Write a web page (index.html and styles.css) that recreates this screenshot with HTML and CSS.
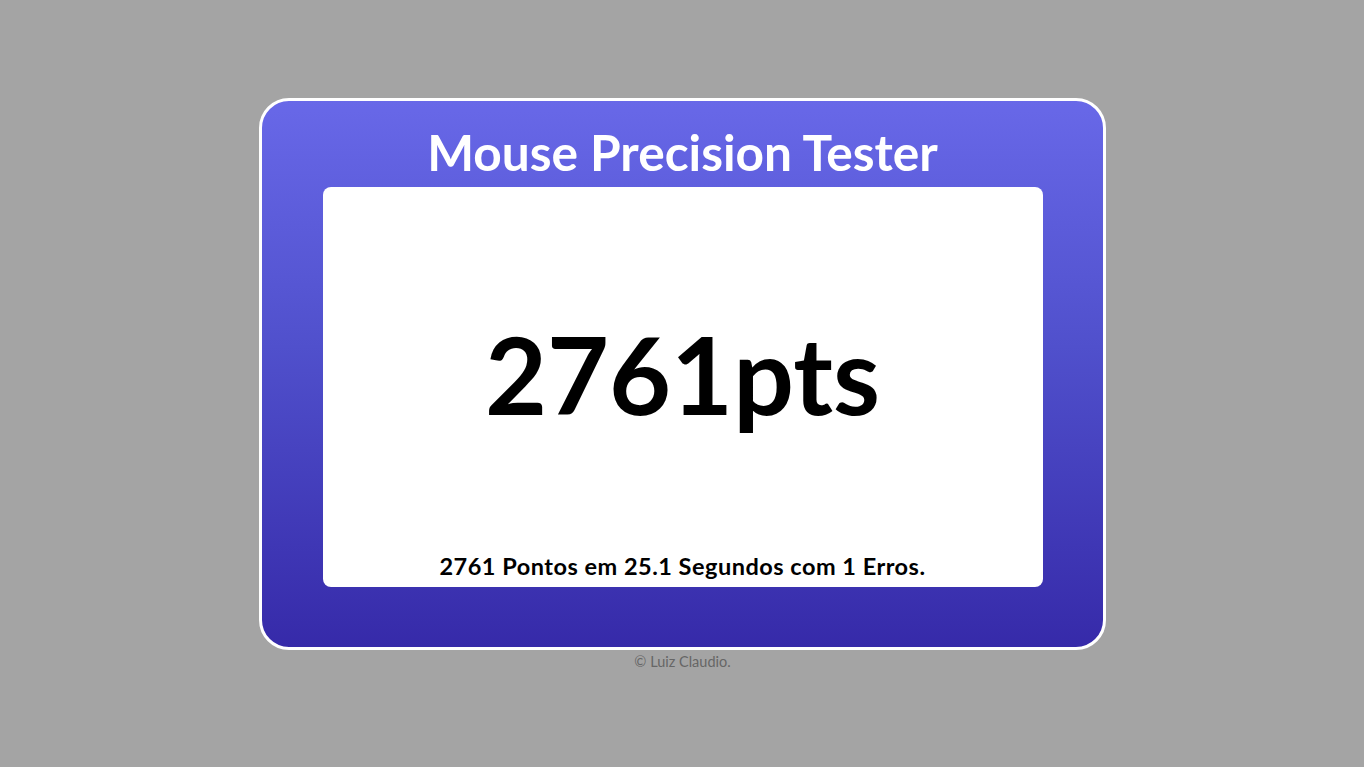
FILE: index.html
```html
<!DOCTYPE html>
<html lang="pt">
<head>
<meta charset="utf-8">
<title>Mouse Precision Tester</title>
<link rel="stylesheet" href="styles.css">
</head>
<body>
<main class="page">
  <section class="card">
    <h1 class="title">Mouse Precision Tester</h1>
    <div class="board">
      <div class="score">2761pts</div>
      <p class="summary">2761 Pontos em 25.1 Segundos com 1 Erros.</p>
    </div>
  </section>
  <footer class="credit">© Luiz Claudio.</footer>
</main>
</body>
</html>
```
FILE: styles.css
```css
html, body {
  margin: 0;
  padding: 0;
}
body {
  background: #a4a4a4;
  font-family: Lato, "Open Sans", "Liberation Sans", sans-serif;
}
.page {
  height: 100vh;
  box-sizing: border-box;
  padding-left: 1px;
  display: flex;
  flex-direction: column;
  align-items: center;
  justify-content: center;
}
.card {
  box-sizing: border-box;
  width: 847px;
  height: 552px;
  border: 3px solid #ffffff;
  border-radius: 30px;
  background: linear-gradient(180deg, #6868e8 0%, #5050cc 45%, #362aa9 100%);
  display: flex;
  flex-direction: column;
  align-items: center;
}
.title {
  margin: 0;
  height: 86px;
  display: flex;
  align-items: center;
  justify-content: center;
  padding-top: 17px;
  box-sizing: border-box;
  color: #ffffff;
  font-size: 49.6px;
  font-weight: 700;
  line-height: 1;
}
.board {
  width: 720px;
  height: 400px;
  background: #ffffff;
  border-radius: 8px;
  display: flex;
  flex-direction: column;
  align-items: center;
}
.score {
  flex: 1;
  display: flex;
  align-items: center;
  justify-content: center;
  padding-top: 6px;
  font-size: 107px;
  font-weight: 700;
  color: #000000;
  line-height: 1;
}
.summary {
  margin: 0 0 9px;
  font-size: 23.5px;
  letter-spacing: 0.5px;
  font-weight: 700;
  color: #000000;
  line-height: 24px;
}
.credit {
  height: 19px;
  padding-top: 3px;
  box-sizing: border-box;
  display: flex;
  align-items: center;
  color: #666666;
  font-size: 14.5px;
}
```
